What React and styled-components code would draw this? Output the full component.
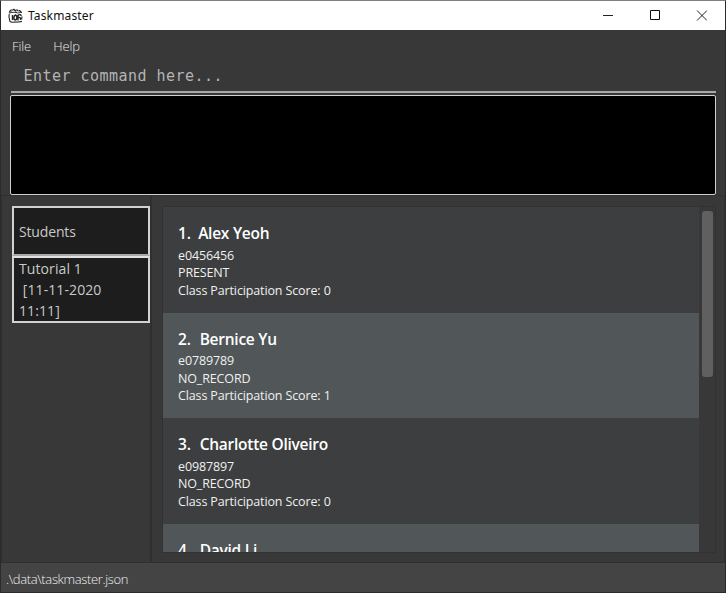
import React from "react";
import styled, { createGlobalStyle } from "styled-components";

const GlobalStyle = createGlobalStyle`
  * { box-sizing: border-box; }
  body { margin: 0; background: #383838; overflow: hidden; }
`;

const Window = styled.div`
  width: 726px;
  height: 593px;
  display: flex;
  flex-direction: column;
  background: #383838;
  border: 1px solid #2b2b2b;
  border-top-color: #808080;
  font-family: "Open Sans", "Noto Sans", sans-serif;
  overflow: hidden;
`;

const TitleBar = styled.header`
  height: 29px;
  flex: none;
  display: flex;
  align-items: center;
  padding: 0 18px 0 6px;
  background: #fff;
`;

const Title = styled.span`
  flex: 1;
  margin-left: 4px;
  font-family: "Noto Sans", sans-serif;
  font-size: 12px;
  line-height: 16px;
  letter-spacing: 0.14px;
  color: #111;
`;

const WindowControls = styled.div`
  display: flex;
  gap: 36px;
`;

const Glyph = styled.svg`
  display: block;
  flex: none;
`;

const MenuBar = styled.nav`
  height: 33px;
  flex: none;
  display: flex;
  gap: 22px;
  padding: 7px 0 0 11px;
`;

const MenuItem = styled.span`
  font-size: 13px;
  line-height: 18px;
  letter-spacing: -0.1px;
  font-weight: 300;
  color: #e8e8e8;
`;

const CommandField = styled.div`
  height: 30px;
  flex: none;
  margin: 0 9px 0 10px;
  padding: 2px 0 0 12.5px;
  border-bottom: 2px solid #a9a9a9;
  font-family: "DejaVu Sans Mono", monospace;
  font-size: 15px;
  line-height: 22px;
  letter-spacing: 0.47px;
  color: #b4b4b4;
`;

const ResultBox = styled.div`
  height: 100px;
  flex: none;
  margin: 2px 9px 0;
  background: #000;
  border: 1px solid #d0d0d0;
  border-radius: 2px;
`;

const Main = styled.main`
  height: 368px;
  flex: none;
  display: flex;
  border: 1px solid #303030;
`;

const Sidebar = styled.aside`
  width: 150px;
  flex: none;
  padding: 10px 0 0 10px;
  border-right: 2px solid #2f2f2f;
`;

const Session = styled.div`
  height: ${(p) => p.$height};
  display: flex;
  align-items: center;
  padding-left: 5px;
  background: #1d1d1d;
  border: 2px solid #d2d2d2;
  color: #c9c9c9;
  font-size: 14px;
  line-height: 21px;
  letter-spacing: ${(p) => p.$spacing};
  white-space: pre;

  & + & {
    border-top-color: #e0e0e0;
  }

  &:first-child {
    border-bottom-color: #a8a8a8;
  }
`;

const StudentPanel = styled.section`
  flex: 1;
  display: flex;
  margin: 10px 8px 9px 10px;
  border: 1px solid #323232;
`;

const StudentList = styled.div`
  flex: 1;
  overflow: hidden;
`;

const StudentRow = styled.article`
  height: 105.65px;
  padding: 15px 0 0 15px;
  background: ${(p) => (p.$alternate ? "#515658" : "#3c3e3f")};
  color: #f0f0f0;
`;

const StudentName = styled.h2`
  display: flex;
  gap: ${(p) => p.$gap};
  margin: 0 0 2.5px;
  font-size: 15.5px;
  line-height: 22px;
  font-weight: 600;
  letter-spacing: -0.25px;
  color: #fff;
`;

const Detail = styled.p`
  margin: 0;
  font-size: 12.5px;
  line-height: 17.6px;
  letter-spacing: -0.13px;
`;

const ScrollTrack = styled.div`
  width: 16px;
  flex: none;
  padding: 4px 2px 0 3px;
  background: #383838;
`;

const ScrollThumb = styled.div`
  height: 166px;
  border-radius: 3px;
  background: #606060;
`;

const StatusBar = styled.footer`
  flex: 1;
  padding: 7px 0 0 5px;
  background: #444;
  color: #f0f0f0;
  font-size: 13px;
  line-height: 18px;
  font-weight: 300;
  letter-spacing: -0.35px;
`;

const students = [
  { name: "Alex Yeoh", id: "e0456456", attendance: "PRESENT", score: 0 },
  { name: "Bernice Yu", id: "e0789789", attendance: "NO_RECORD", score: 1 },
  { name: "Charlotte Oliveiro", id: "e0987897", attendance: "NO_RECORD", score: 0 },
  { name: "David Li" },
];

function AppIcon() {
  return (
    <Glyph width="17" height="16" viewBox="0 0 17 16" fill="none" stroke="#222">
      <path d="M2 4.5 4 2h2l1-.8 1 1.3 2-.7 1 1 3 .2M2.2 6 2 9l1 4.5 2 .8 7-.4 3-.4M15 8.5l-.4 3" strokeWidth="1.1" />
      <path d="m2 5 5-.8L11 5l4-1M3 2.5l2 2M8 2l1.5 2.5M12 2l3 3" strokeWidth="0.9" />
      <path d="M5.5 7v5M8.5 7c-2.2.8-2 5-.2 5s2.4-4 .2-5ZM11 12.5V7.5c1-1.5 3.5-1 3 .5M11 9.5c2-.6 3 .6 2.5 2.5" strokeWidth="1.4" />
    </Glyph>
  );
}

export default function App() {
  return (
    <>
      <GlobalStyle />
      <Window>
        <TitleBar>
          <AppIcon />
          <Title>Taskmaster</Title>
          <WindowControls>
            <Glyph width="11" height="11" stroke="#222"><path d="M1 5.5h10" /></Glyph>
            <Glyph width="11" height="11" fill="none" stroke="#111"><path d="M1.5.5h9v9h-9z" /></Glyph>
            <Glyph width="11" height="11" stroke="#222"><path d="m1 .5 10 10m0-10-10 10" /></Glyph>
          </WindowControls>
        </TitleBar>
        <MenuBar>
          <MenuItem>File</MenuItem>
          <MenuItem>Help</MenuItem>
        </MenuBar>
        <CommandField>Enter command here...</CommandField>
        <ResultBox />
        <Main>
          <Sidebar>
            <Session $height="50px" $spacing="-0.15px">Students</Session>
            <Session $height="67px" $spacing="0.1px">{"Tutorial 1\n [11-11-2020\n11:11]"}</Session>
          </Sidebar>
          <StudentPanel>
            <StudentList>
              {students.map((s, i) => (
                <StudentRow key={s.name} $alternate={i % 2 === 1}>
                  <StudentName $gap={i === 0 ? "7.5px" : "9px"}>
                    <span>{i + 1}.</span>
                    <span>{s.name}</span>
                  </StudentName>
                  {s.id && (
                    <>
                      <Detail>{s.id}</Detail>
                      <Detail>{s.attendance}</Detail>
                      <Detail>Class Participation Score: {s.score}</Detail>
                    </>
                  )}
                </StudentRow>
              ))}
            </StudentList>
            <ScrollTrack><ScrollThumb /></ScrollTrack>
          </StudentPanel>
        </Main>
        <StatusBar>.\data\taskmaster.json</StatusBar>
      </Window>
    </>
  );
}
